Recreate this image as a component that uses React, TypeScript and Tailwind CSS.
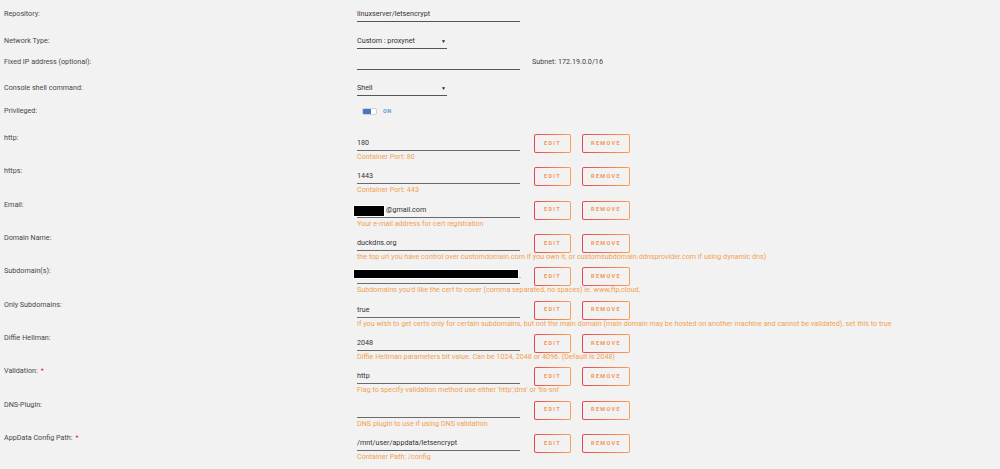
const ports = [
  { label: "http:", value: "180", help: "Container Port: 80" },
  { label: "https:", value: "1443", help: "Container Port: 443" },
  { label: "Email:", value: "@gmail.com", help: "Your e-mail address for cert registration", mask: "email" },
  {
    label: "Domain Name:",
    value: "duckdns.org",
    help: "the top url you have control over customdomain.com if you own it, or customsubdomain.ddnsprovider.com if using dynamic dns)",
  },
  {
    label: "Subdomain(s):",
    value: ".",
    help: "Subdomains you'd like the cert to cover (comma separated, no spaces) ie. www,ftp,cloud,",
    mask: "sub",
  },
  {
    label: "Only Subdomains:",
    value: "true",
    help: "If you wish to get certs only for certain subdomains, but not the main domain (main domain may be hosted on another machine and cannot be validated), set this to true",
  },
  {
    label: "Diffie Hellman:",
    value: "2048",
    help: "Diffie Hellman parameters bit value. Can be 1024, 2048 or 4096. (Default is 2048)",
  },
  {
    label: "Validation:",
    value: "http",
    help: "Flag to specify validation method use either 'http','dns' or 'tls-sni'",
    required: true,
  },
  { label: "DNS-Plugin:", value: "", help: "DNS plugin to use if using DNS validation" },
  {
    label: "AppData Config Path:",
    value: "/mnt/user/appdata/letsencrypt",
    help: "Container Path: /config",
    required: true,
  },
];

function GradButton({ text, wide }: { text: string; wide?: boolean }) {
  return (
    <div
      className={`${wide ? "w-[48px]" : "w-[37px]"} h-[19px] rounded-[2px] bg-gradient-to-r from-[#e5444e] to-[#f9a058] p-[1px]`}
    >
      <div className="flex h-full w-full items-center justify-center rounded-[1px] bg-[#f2f2f2] text-[5.5px] font-bold leading-none tracking-[0.24em] text-[#f29658]">
        {text}
      </div>
    </div>
  );
}

function Label({ children, required }: { children: React.ReactNode; required?: boolean }) {
  return (
    <div className="w-[353px] shrink-0 text-[7.2px] leading-[10px] text-[#484848]">
      {children}
      {required && <span className="ml-[3px] text-[#e22828]">*</span>}
    </div>
  );
}

function Select({ value }: { value: string }) {
  return (
    <div className="flex h-[13px] w-[90px] items-start justify-between border-b border-[#555] text-[7.2px] leading-[10px] text-[#333]">
      <span>{value}</span>
      <span className="mr-[1px] text-[5px] leading-[10px] text-[#222]">▼</span>
    </div>
  );
}

export default function App() {
  return (
    <div
      className="h-[469px] w-[1000px] overflow-hidden bg-[#f2f2f2] pl-[4px]"
      style={{ fontFamily: 'Roboto, "Liberation Sans", sans-serif' }}
    >
      <div className="flex h-[36px] items-start pt-[9px]">
        <Label>Repository:</Label>
        <div className="h-[13px] w-[163px] border-b border-[#555] text-[7.2px] leading-[10px] text-[#333]">
          linuxserver/letsencrypt
        </div>
      </div>
      <div className="flex h-[21px] items-start">
        <Label>Network Type:</Label>
        <Select value="Custom : proxynet" />
      </div>
      <div className="flex h-[26px] items-start">
        <Label>Fixed IP address (optional):</Label>
        <div className="h-[13px] w-[163px] border-b border-[#555]" />
        <div className="ml-[12px] text-[7.2px] leading-[10px] text-[#444]">Subnet: 172.19.0.0/16</div>
      </div>
      <div className="flex h-[23px] items-start">
        <Label>Console shell command:</Label>
        <Select value="Shell" />
      </div>
      <div className="flex h-[27px] items-start">
        <Label>Privileged:</Label>
        <div className="ml-[5px] flex h-[10px] items-center gap-[6px]">
          <div className="flex h-[7px] w-[15px] overflow-hidden rounded-[2px] border border-[#cfcfcf] bg-white">
            <div className="h-full w-[8px] bg-[#4a74c4]" />
          </div>
          <span className="text-[5.5px] font-bold leading-[10px] tracking-[0.1em] text-[#5a9bd8]">ON</span>
        </div>
      </div>
      {ports.map((p) => (
        <div key={p.label} className="flex h-[33.33px] items-start">
          <Label required={p.required}>{p.label}</Label>
          <div className="w-[163px] shrink-0">
            <div className="mt-[5px] flex h-[13px] items-start border-b border-[#6a6a6a] text-[7.2px] leading-[10px] text-[#333]">
              {p.mask === "email" && (
                <span className="ml-[-3px] mr-[2px] mt-[1px] inline-block h-[10px] w-[30px] shrink-0 bg-black shadow-[0_0_0_1px_#fff]" />
              )}
              {p.mask === "sub" && (
                <span className="ml-[-3px] mr-[1px] mt-[-1px] inline-block h-[8px] w-[164px] shrink-0 bg-black shadow-[0_0_0_1px_#fff]" />
              )}
              <span>{p.value}</span>
            </div>
            <div className="mt-[1px] whitespace-nowrap text-[7.2px] leading-[10px] text-[#f2a14f]">{p.help}</div>
          </div>
          <div className="ml-[14px] mt-[1px] flex gap-[11px]">
            <GradButton text="EDIT" />
            <GradButton text="REMOVE" wide />
          </div>
        </div>
      ))}
    </div>
  );
}
